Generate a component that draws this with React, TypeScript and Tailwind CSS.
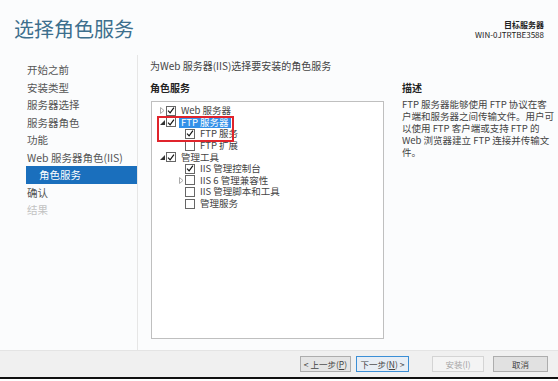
const font = { fontFamily: '"Noto Sans CJK SC", "Noto Sans", sans-serif' };

const navItems = [
  { label: '开始之前' },
  { label: '安装类型' },
  { label: '服务器选择' },
  { label: '服务器角色' },
  { label: '功能' },
  { label: 'Web 服务器角色(IIS)' },
  { label: '角色服务', active: true },
  { label: '确认' },
  { label: '结果', disabled: true },
];

type Row = {
  label: string;
  level: number;
  checked: boolean;
  arrow?: 'open' | 'closed';
  selected?: boolean;
};

const rows: Row[] = [
  { label: 'Web 服务器', level: 0, checked: true, arrow: 'closed' },
  { label: 'FTP 服务器', level: 0, checked: true, arrow: 'open', selected: true },
  { label: 'FTP 服务', level: 1, checked: true },
  { label: 'FTP 扩展', level: 1, checked: false },
  { label: '管理工具', level: 0, checked: true, arrow: 'open' },
  { label: 'IIS 管理控制台', level: 1, checked: true },
  { label: 'IIS 6 管理兼容性', level: 1, checked: false, arrow: 'closed' },
  { label: 'IIS 管理脚本和工具', level: 1, checked: false },
  { label: '管理服务', level: 1, checked: false },
];

const descLines = [
  'FTP 服务器能够使用 FTP 协议在客',
  '户端和服务器之间传输文件。用户可',
  '以使用 FTP 客户端或支持 FTP 的',
  'Web 浏览器建立 FTP 连接并传输文',
  '件。',
];

const Check = ({ checked }: { checked: boolean }) => (
  <div className="w-[10px] h-[10px] border border-[#666] bg-white flex items-center justify-center shrink-0">
    {checked && (
      <svg width="9" height="9" viewBox="0 0 9 9">
        <path d="M1.2 4.6 L3.5 7.2 L7.8 1.2" fill="none" stroke="#111" strokeWidth="1.3" />
      </svg>
    )}
  </div>
);

const Arrow = ({ kind }: { kind?: 'open' | 'closed' }) => (
  <div className="w-[8px] h-[10px] flex items-center justify-center shrink-0">
    {kind === 'closed' && (
      <svg width="5" height="7" viewBox="0 0 5 7">
        <path d="M0.5 0.5 L4 3.5 L0.5 6.5 Z" fill="none" stroke="#a0a0a0" strokeWidth="0.9" />
      </svg>
    )}
    {kind === 'open' && (
      <svg width="5" height="5" viewBox="0 0 5 5">
        <path d="M5 0 L5 5 L0 5 Z" fill="#333" />
      </svg>
    )}
  </div>
);

export default function App() {
  return (
    <div className="w-[558px] h-[381px] bg-[#fbfcfd] flex flex-col text-[#333]" style={font}>
      <div className="h-[55px] flex justify-between shrink-0">
        <div className="pl-[14px] pt-[16px] text-[20px] leading-[26px] text-[#3d6f8d]">选择角色服务</div>
        <div className="pr-[14px] pt-[20px] text-right text-[8px] leading-[10px] text-[#222]">
          <div className="font-bold">目标服务器</div>
          <div>WIN-0JTRTBE3588</div>
        </div>
      </div>

      <div className="flex flex-1">
        <div className="w-[138px] border-r border-[#e6e6e6] pt-[6px] text-[10.5px] shrink-0">
          {navItems.map((n) => (
            <div
              key={n.label}
              className={
                n.active
                  ? 'ml-[26px] h-[17.5px] leading-[17.5px] pl-[13px] bg-[#1a6fbd] text-white'
                  : n.disabled
                  ? 'pl-[27px] h-[17.5px] leading-[17.5px] text-[#c2c2c2]'
                  : 'pl-[27px] h-[17.5px] leading-[17.5px] text-[#555]'
              }
            >
              {n.label}
            </div>
          ))}
        </div>

        <div className="flex-1 pl-[12px] pt-[4px] flex">
          <div className="w-[234px]">
            <div className="text-[10px] leading-[14px] text-[#444]">为Web 服务器(IIS)选择要安装的角色服务</div>
            <div className="mt-[8px] text-[10px] leading-[14px] font-bold text-[#222]">角色服务</div>
            <div className="relative mt-[6px] ml-[1px] h-[238px] border border-[#bfbfbf] bg-white pt-[3px] pl-[6px] text-[9.5px]">
              {rows.map((r) => (
                <div
                  key={r.label}
                  className={r.level === 1 ? 'flex items-center h-[11.6px] pl-[19px]' : 'flex items-center h-[11.6px]'}
                >
                  <Arrow kind={r.arrow} />
                  <Check checked={r.checked} />
                  <span
                    className={
                      r.selected
                        ? 'ml-[3px] px-[2px] leading-[11px] bg-[#3390e8] text-white'
                        : 'ml-[5px] leading-[11px] text-[#444]'
                    }
                  >
                    {r.label}
                  </span>
                </div>
              ))}
              <div className="absolute left-[5px] top-[14px] w-[77px] h-[26px] border-2 border-[#e0242c]" />
            </div>
          </div>

          <div className="ml-[18px] w-[150px] pt-[22px]">
            <div className="text-[10px] leading-[14px] font-bold text-[#222]">描述</div>
            <div className="mt-[3px] text-[9.5px] text-[#444]">
              {descLines.map((l) => (
                <div key={l} className="leading-[12px] whitespace-nowrap">{l}</div>
              ))}
            </div>
          </div>
        </div>
      </div>

      <div className="h-[27px] bg-[#f0f0f0] border-t border-[#e4e4e4] flex items-center justify-end pr-[10px] gap-[5px] text-[8.5px] shrink-0">
        <div className="w-[51px] h-[16px] border border-[#adadad] bg-[#e5e5e5] text-[#444] flex items-center justify-center">&lt; 上一步(<u>P</u>)</div>
        <div className="w-[53px] h-[16px] border border-[#3c8fd6] bg-[#e8eef5] text-[#444] flex items-center justify-center">下一步(<u>N</u>) &gt;</div>
        <div className="ml-[18px] w-[52px] h-[16px] border border-[#d4d4d4] bg-[#f4f4f4] text-[#a6a6a6] flex items-center justify-center">安装(I)</div>
        <div className="ml-[4px] w-[55px] h-[16px] border border-[#adadad] bg-[#e1e1e1] text-[#444] flex items-center justify-center">取消</div>
      </div>
      <div className="h-[2px] bg-[#111] shrink-0" />
      <div className="h-[2px] bg-white shrink-0" />
    </div>
  );
}
